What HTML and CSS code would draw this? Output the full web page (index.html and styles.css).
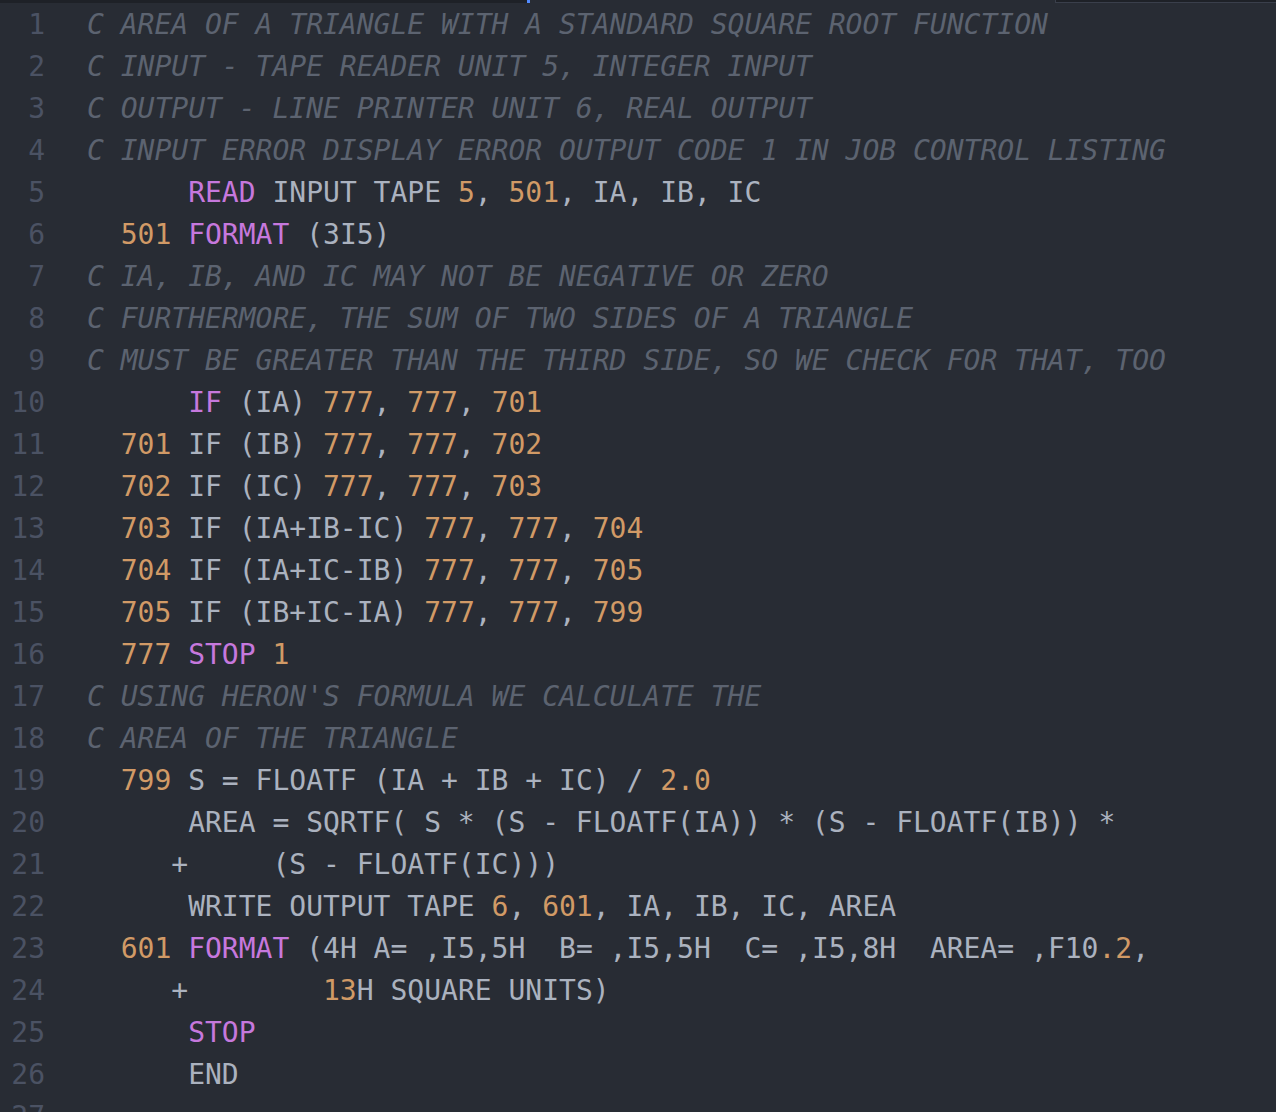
FILE: index.html
```html
<!DOCTYPE html>
<html>
<head>
<meta charset="utf-8">
<link rel="stylesheet" href="styles.css">
</head>
<body>
<div class="editor">
  <div class="topbar">
    <div class="tb-left"></div>
    <div class="tb-cursor"></div>
    <div class="tb-gap"></div>
    <div class="tb-right"></div>
  </div>
  <div class="lines">
    <div class="row"><span class="ln">1</span><span class="code"><span class="c">C AREA OF A TRIANGLE WITH A STANDARD SQUARE ROOT FUNCTION</span></span></div>
    <div class="row"><span class="ln">2</span><span class="code"><span class="c">C INPUT - TAPE READER UNIT 5, INTEGER INPUT</span></span></div>
    <div class="row"><span class="ln">3</span><span class="code"><span class="c">C OUTPUT - LINE PRINTER UNIT 6, REAL OUTPUT</span></span></div>
    <div class="row"><span class="ln">4</span><span class="code"><span class="c">C INPUT ERROR DISPLAY ERROR OUTPUT CODE 1 IN JOB CONTROL LISTING</span></span></div>
    <div class="row"><span class="ln">5</span><span class="code">      <span class="k">READ</span> INPUT TAPE <span class="n">5</span>, <span class="n">501</span>, IA, IB, IC</span></div>
    <div class="row"><span class="ln">6</span><span class="code">  <span class="n">501</span> <span class="k">FORMAT</span> (3I5)</span></div>
    <div class="row"><span class="ln">7</span><span class="code"><span class="c">C IA, IB, AND IC MAY NOT BE NEGATIVE OR ZERO</span></span></div>
    <div class="row"><span class="ln">8</span><span class="code"><span class="c">C FURTHERMORE, THE SUM OF TWO SIDES OF A TRIANGLE</span></span></div>
    <div class="row"><span class="ln">9</span><span class="code"><span class="c">C MUST BE GREATER THAN THE THIRD SIDE, SO WE CHECK FOR THAT, TOO</span></span></div>
    <div class="row"><span class="ln">10</span><span class="code">      <span class="k">IF</span> (IA) <span class="n">777</span>, <span class="n">777</span>, <span class="n">701</span></span></div>
    <div class="row"><span class="ln">11</span><span class="code">  <span class="n">701</span> IF (IB) <span class="n">777</span>, <span class="n">777</span>, <span class="n">702</span></span></div>
    <div class="row"><span class="ln">12</span><span class="code">  <span class="n">702</span> IF (IC) <span class="n">777</span>, <span class="n">777</span>, <span class="n">703</span></span></div>
    <div class="row"><span class="ln">13</span><span class="code">  <span class="n">703</span> IF (IA+IB-IC) <span class="n">777</span>, <span class="n">777</span>, <span class="n">704</span></span></div>
    <div class="row"><span class="ln">14</span><span class="code">  <span class="n">704</span> IF (IA+IC-IB) <span class="n">777</span>, <span class="n">777</span>, <span class="n">705</span></span></div>
    <div class="row"><span class="ln">15</span><span class="code">  <span class="n">705</span> IF (IB+IC-IA) <span class="n">777</span>, <span class="n">777</span>, <span class="n">799</span></span></div>
    <div class="row"><span class="ln">16</span><span class="code">  <span class="n">777</span> <span class="k">STOP</span> <span class="n">1</span></span></div>
    <div class="row"><span class="ln">17</span><span class="code"><span class="c">C USING HERON'S FORMULA WE CALCULATE THE</span></span></div>
    <div class="row"><span class="ln">18</span><span class="code"><span class="c">C AREA OF THE TRIANGLE</span></span></div>
    <div class="row"><span class="ln">19</span><span class="code">  <span class="n">799</span> S = FLOATF (IA + IB + IC) / <span class="n">2.0</span></span></div>
    <div class="row"><span class="ln">20</span><span class="code">      AREA = SQRTF( S * (S - FLOATF(IA)) * (S - FLOATF(IB)) *</span></div>
    <div class="row"><span class="ln">21</span><span class="code">     +     (S - FLOATF(IC)))</span></div>
    <div class="row"><span class="ln">22</span><span class="code">      WRITE OUTPUT TAPE <span class="n">6</span>, <span class="n">601</span>, IA, IB, IC, AREA</span></div>
    <div class="row"><span class="ln">23</span><span class="code">  <span class="n">601</span> <span class="k">FORMAT</span> (4H A= ,I5,5H  B= ,I5,5H  C= ,I5,8H  AREA= ,F10<span class="n">.2</span>,</span></div>
    <div class="row"><span class="ln">24</span><span class="code">     +        <span class="n">13</span>H SQUARE UNITS)</span></div>
    <div class="row"><span class="ln">25</span><span class="code">      <span class="k">STOP</span></span></div>
    <div class="row"><span class="ln">26</span><span class="code">      END</span></div>
    <div class="row"><span class="ln">27</span><span class="code"></span></div>
  </div>
</div>
</body>
</html>
```
FILE: styles.css
```css
html, body {
  margin: 0;
  padding: 0;
  background: #282c34;
  height: 100%;
  overflow: hidden;
}
.editor {
  font-family: "DejaVu Sans Mono", "Liberation Mono", monospace;
  font-size: 28px;
  color: #abb2bf;
}
.topbar {
  display: flex;
  height: 3px;
}
.tb-left {
  width: 527px;
  background: #1e2127;
}
.tb-cursor {
  width: 3px;
  background: #528bff;
}
.tb-gap {
  flex: 1;
}
.tb-right {
  width: 221px;
  background: #1e2127;
  box-shadow: inset 1px -1px 0 #3a3f4b;
}
.lines {
  display: flex;
  flex-direction: column;
  padding-top: 1px;
}
.row {
  display: flex;
  height: 42px;
  line-height: 42px;
  white-space: pre;
}
.ln {
  width: 45px;
  text-align: right;
  color: #4b5263;
  flex: none;
}
.code {
  margin-left: 42px;
}
.c {
  color: #5c6370;
  font-style: italic;
}
.k {
  color: #c678dd;
}
.n {
  color: #d19a66;
}
```
